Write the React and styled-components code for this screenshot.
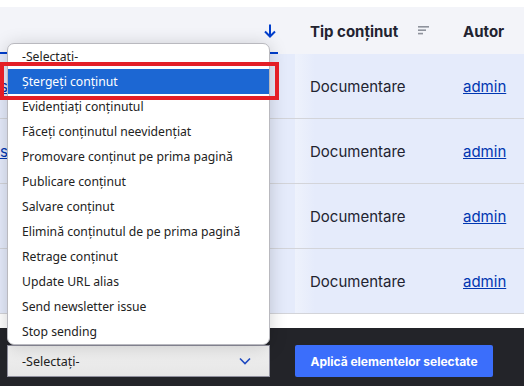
import styled, { createGlobalStyle } from "styled-components";

const GlobalStyle = createGlobalStyle`
  body {
    margin: 0;
    font-family: "Inter", "Noto Sans", sans-serif;
    background: #fff;
  }
`;

const rows = [
  { type: "Documentare", author: "admin", title: "s" },
  { type: "Documentare", author: "admin", title: "s" },
  { type: "Documentare", author: "admin", title: "" },
  { type: "Documentare", author: "admin", title: "" },
];

const actions = [
  "-Selectați-",
  "Ștergeți conținut",
  "Evidențiați conținutul",
  "Făceți conținutul neevidențiat",
  "Promovare conținut pe prima pagină",
  "Publicare conținut",
  "Salvare conținut",
  "Elimină conținutul de pe prima pagină",
  "Retrage conținut",
  "Update URL alias",
  "Send newsletter issue",
  "Stop sending",
];

export default function App() {
  return (
    <Page>
      <GlobalStyle />
      <Table>
        <HeadRow>
          <TitleHead>
            <ActiveSort>
              <svg width="12" height="14" viewBox="0 0 12 14">
                <path d="M6 0.5v12M1 7.5l5 5 5-5" fill="none" stroke="#003ecc" strokeWidth="2" />
              </svg>
            </ActiveSort>
          </TitleHead>
          <HeadCell>
            Tip conținut
            <SortIcon width="12" height="9" viewBox="0 0 12 9">
              <rect x="0" y="0" width="11" height="1.6" fill="#8e929c" />
              <rect x="0" y="3.4" width="8" height="1.6" fill="#8e929c" />
              <rect x="0" y="6.8" width="5" height="1.6" fill="#8e929c" />
            </SortIcon>
          </HeadCell>
          <HeadCell>Autor</HeadCell>
        </HeadRow>
        {rows.map((r, i) => (
          <Row key={i}>
            <TitleCell>{r.title && <Link href="#">{r.title}</Link>}</TitleCell>
            <TypeCell>{r.type}</TypeCell>
            <Cell>
              <Link href="#">{r.author}</Link>
            </Cell>
          </Row>
        ))}
      </Table>
      <Spacer />
      <ActionBar>
        <Select>
          -Selectați-
          <svg width="12" height="8" viewBox="0 0 12 8">
            <path d="M1 1.5l5 5 5-5" fill="none" stroke="#1f4ac2" strokeWidth="1.6" />
          </svg>
        </Select>
        <ApplyButton>Aplică elementelor selectate</ApplyButton>
      </ActionBar>

      <Dropdown>
        {actions.map((a, i) => (
          <Option key={a} $selected={i === 1}>
            {a}
          </Option>
        ))}
      </Dropdown>
      <Highlight />
    </Page>
  );
}

const Page = styled.div`
  position: relative;
  width: 524px;
  height: 386px;
  overflow: hidden;
  display: flex;
  flex-direction: column;
  background: #fff;
`;

const Table = styled.div`
  margin-top: 7px;
  display: flex;
  flex-direction: column;
`;

const grid = `
  display: grid;
  grid-template-columns: 295px 153px 1fr;
  align-items: center;
`;

const HeadRow = styled.div`
  ${grid}
  height: 47px;
  background: #f3f4f9;
`;

const TitleHead = styled.div`
  height: 100%;
  display: flex;
`;

const ActiveSort = styled.div`
  width: 278px;
  height: 100%;
  box-sizing: border-box;
  border-bottom: 2px solid #003ecc;
  display: flex;
  justify-content: flex-end;
  align-items: center;
  padding: 3px 2px 0 0;
  svg {
    display: block;
  }
`;

const HeadCell = styled.div`
  padding: 2px 0 0 15px;
  font-size: 15px;
  font-weight: 700;
  color: #222330;
  display: flex;
  align-items: center;
`;

const SortIcon = styled.svg`
  margin-left: 20px;
  margin-top: -2px;
`;

const Row = styled.div`
  ${grid}
  height: 65px;
  box-sizing: border-box;
  border-bottom: 1px solid #d3d4d9;
  background: #e5ebfb;
`;

const Cell = styled.div`
  padding-left: 15px;
  font-size: 15px;
  color: #222330;
`;

const TypeCell = styled(Cell)`
  height: 100%;
  display: flex;
  align-items: center;
  background: linear-gradient(to right, #eef2fc, #e5ebfb 20px);
`;

const TitleCell = styled.div`
  font-size: 15px;
`;

const Link = styled.a`
  color: #0036b1;
  text-decoration: underline;
`;

const Spacer = styled.div`
  height: 14px;
  background: #fff;
`;

const ActionBar = styled.div`
  flex: 1;
  background: #232429;
  display: flex;
  align-items: flex-start;
  padding: 17px 0 0 7px;
  gap: 25px;
`;

const Select = styled.div`
  width: 263px;
  height: 32px;
  box-sizing: border-box;
  border: 1px solid #8f8f9d;
  background: linear-gradient(#f2f2f2, #e6e6e6);
  display: flex;
  align-items: center;
  justify-content: space-between;
  padding: 0 18px 0 14px;
  font-family: "Noto Sans", sans-serif;
  font-size: 12.5px;
  color: #222;
`;

const ApplyButton = styled.button`
  width: 198px;
  height: 32px;
  border: none;
  border-radius: 2px;
  background: #3b6efb;
  color: #fff;
  font-family: "Inter", sans-serif;
  font-weight: 700;
  font-size: 12px;
  padding: 0;
`;

const Dropdown = styled.div`
  position: absolute;
  left: 7px;
  top: 43px;
  width: 263px;
  box-sizing: border-box;
  border: 1px solid #b9b9bf;
  border-radius: 7px;
  background: #fff;
  box-shadow: 0 2px 18px rgba(0, 0, 0, 0.18);
  overflow: hidden;
`;

const Option = styled.div`
  height: 25px;
  display: flex;
  align-items: center;
  padding-left: 14px;
  font-family: "Noto Sans", sans-serif;
  font-size: 12.2px;
  color: ${(p) => (p.$selected ? "#fff" : "#222")};
  background: ${(p) => (p.$selected ? "#1c67d3" : "transparent")};
`;

const Highlight = styled.div`
  position: absolute;
  left: 0;
  top: 62px;
  width: 279px;
  height: 38px;
  box-sizing: border-box;
  border: 4px solid #e41e26;
`;
